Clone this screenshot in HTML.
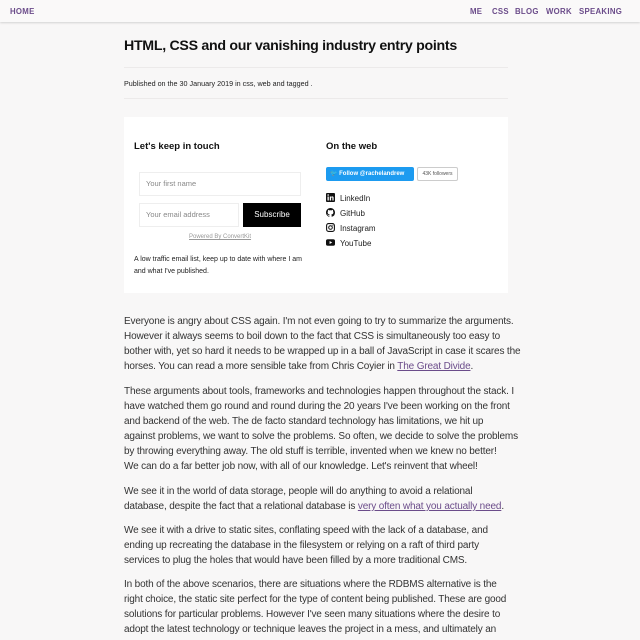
<!DOCTYPE html>
<html><head><meta charset="utf-8"><style>
*{margin:0;padding:0;box-sizing:border-box}
body{width:640px;height:640px;overflow:hidden;background:#f8f7f7;font-family:"Liberation Sans",sans-serif;color:#333}
.nav{height:22px;background:#faf9f9;box-shadow:0 1px 2px rgba(0,0,0,.15);position:relative;font-size:7.8px;font-weight:bold;color:#6b4c8a}
.nav span{position:absolute;top:7px;letter-spacing:.3px}
h1{position:absolute;left:124px;top:38px;font-size:14.2px;color:#111;letter-spacing:-.3px;white-space:nowrap}
.hr{position:absolute;left:124px;width:384px;height:1px;background:#eceaea}
.meta{position:absolute;left:124px;top:79px;font-size:7.2px;color:#222}
.card{position:absolute;left:124px;top:117px;width:384px;height:176px;background:#fff}
.card h3{position:absolute;font-size:9.5px;color:#111}
.in{position:absolute;border:1px solid #eee;font-size:7.5px;color:#888;padding-left:6px;line-height:22px;height:24px}
.txt{position:absolute;left:124px;font-size:10px;line-height:15px;color:#333;letter-spacing:-.15px}
.txt div{white-space:nowrap}
a{color:#6b4c8a}
.soc{position:absolute;left:326px;font-size:8px;color:#222}
.soc svg{vertical-align:-1px;margin-right:5px}
</style></head><body>
<div class="nav"><span style="left:10px">HOME</span><span style="left:470px">ME</span><span style="left:492px">CSS</span><span style="left:515px">BLOG</span><span style="left:546px">WORK</span><span style="left:579px">SPEAKING</span></div>
<h1>HTML, CSS and our vanishing industry entry points</h1>
<div class="hr" style="top:67px"></div>
<div class="meta">Published on the 30 January 2019 in css, web and tagged .</div>
<div class="hr" style="top:98px"></div>
<div class="card">
<h3 style="left:10px;top:24px">Let's keep in touch</h3>
<div class="in" style="left:15px;top:55px;width:162px">Your first name</div>
<div class="in" style="left:15px;top:86px;width:100px">Your email address</div>
<div style="position:absolute;left:119px;top:86px;width:58px;height:24px;background:#000;color:#fff;font-size:8px;text-align:center;line-height:24px">Subscribe</div>
<div style="position:absolute;left:65px;top:117px;font-size:6px;color:#999;text-decoration:underline">Powered By ConvertKit</div>
<div style="position:absolute;left:10px;top:137px;font-size:7px;line-height:12px;color:#222">A low traffic email list, keep up to date with where I am<br>and what I've published.</div>
<h3 style="left:202px;top:24px">On the web</h3>
<div style="position:absolute;left:202px;top:50px;width:88px;height:14px;background:#1d9bf0;border-radius:2px;color:#fff;font-size:6px;font-weight:bold;line-height:14px;padding-left:4px">🐦 Follow @rachelandrew</div>
<div style="position:absolute;left:293px;top:50px;width:41px;height:14px;border:1px solid #ccc;border-radius:2px;font-size:5px;line-height:12px;text-align:center;color:#555">43K followers</div>
</div>
<div class="soc" style="top:193px"><svg width="9" height="9" viewBox="0 0 9 9"><rect width="9" height="9" rx="1" fill="#111"/><rect x="1.5" y="3.5" width="1.3" height="4" fill="#fff"/><circle cx="2.15" cy="2" r=".8" fill="#fff"/><path d="M3.8 3.5h1.2v.6c.3-.5.8-.7 1.3-.7 1 0 1.3.6 1.3 1.6v2.5H6.4V5.3c0-.6-.1-.9-.6-.9s-.7.4-.7.9v2.2H3.8z" fill="#fff"/></svg>LinkedIn</div>
<div class="soc" style="top:208px"><svg width="9" height="9" viewBox="0 0 16 16"><path fill="#111" d="M8 0C3.58 0 0 3.58 0 8c0 3.54 2.29 6.53 5.47 7.59.4.07.55-.17.55-.38v-1.33c-2.23.48-2.7-1.07-2.7-1.07-.36-.92-.89-1.17-.89-1.17-.73-.5.06-.49.06-.49.8.06 1.23.83 1.23.83.72 1.23 1.88.87 2.34.67.07-.52.28-.87.51-1.07-1.78-.2-3.64-.89-3.64-3.95 0-.87.31-1.59.82-2.15-.08-.2-.36-1.02.08-2.12 0 0 .67-.21 2.2.82a7.6 7.6 0 0 1 4 0c1.53-1.04 2.2-.82 2.2-.82.44 1.1.16 1.92.08 2.12.51.56.82 1.27.82 2.15 0 3.07-1.87 3.75-3.65 3.95.29.25.54.73.54 1.48v2.2c0 .21.15.46.55.38A8 8 0 0 0 16 8c0-4.42-3.58-8-8-8z"/></svg>GitHub</div>
<div class="soc" style="top:223px"><svg width="9" height="9" viewBox="0 0 9 9"><rect x=".6" y=".6" width="7.8" height="7.8" rx="2" fill="none" stroke="#111" stroke-width="1.1"/><circle cx="4.5" cy="4.5" r="1.8" fill="none" stroke="#111" stroke-width="1"/><circle cx="6.8" cy="2.2" r=".5" fill="#111"/></svg>Instagram</div>
<div class="soc" style="top:238px"><svg width="9" height="9" viewBox="0 0 9 9"><rect y="1.2" width="9" height="6.6" rx="1.8" fill="#111"/><path d="M3.6 3v3l2.6-1.5z" fill="#fff"/></svg>YouTube</div>
<div class="txt" style="top:314px">
<div>Everyone is angry about CSS again. I'm not even going to try to summarize the arguments.</div>
<div>However it always seems to boil down to the fact that CSS is simultaneously too easy to</div>
<div>bother with, yet so hard it needs to be wrapped up in a ball of JavaScript in case it scares the</div>
<div>horses. You can read a more sensible take from Chris Coyier in <a href="#">The Great Divide</a>.</div>
</div>
<div class="txt" style="top:384px">
<div>These arguments about tools, frameworks and technologies happen throughout the stack. I</div>
<div>have watched them go round and round during the 20 years I've been working on the front</div>
<div>and backend of the web. The de facto standard technology has limitations, we hit up</div>
<div>against problems, we want to solve the problems. So often, we decide to solve the problems</div>
<div>by throwing everything away. The old stuff is terrible, invented when we knew no better!</div>
<div>We can do a far better job now, with all of our knowledge. Let's reinvent that wheel!</div>
</div>
<div class="txt" style="top:484px">
<div>We see it in the world of data storage, people will do anything to avoid a relational</div>
<div>database, despite the fact that a relational database is <a href="#">very often what you actually need</a>.</div>
</div>
<div class="txt" style="top:523px">
<div>We see it with a drive to static sites, conflating speed with the lack of a database, and</div>
<div>ending up recreating the database in the filesystem or relying on a raft of third party</div>
<div>services to plug the holes that would have been filled by a more traditional CMS.</div>
</div>
<div class="txt" style="top:577px">
<div>In both of the above scenarios, there are situations where the RDBMS alternative is the</div>
<div>right choice, the static site perfect for the type of content being published. These are good</div>
<div>solutions for particular problems. However I've seen many situations where the desire to</div>
<div>adopt the latest technology or technique leaves the project in a mess, and ultimately an</div>
</div>
</body></html>
